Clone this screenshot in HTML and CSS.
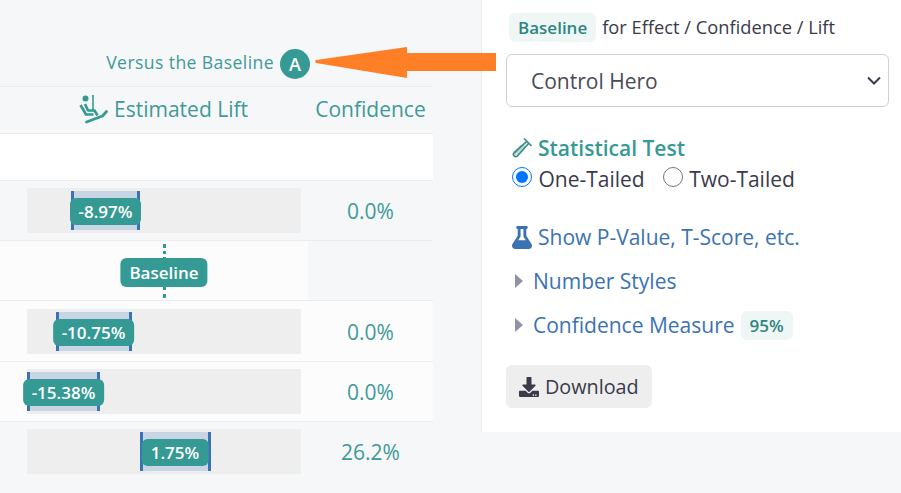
FILE: index.html
```html
<!DOCTYPE html>
<html lang="en">
	<head>
		<meta charset="UTF-8" />
		<title>Experiment Results</title>
		<link rel="stylesheet" href="styles.css">
	</head>
	<body>
		<div class="page">
			<div class="results">
				<div class="versus">
					<span class="versus-text">Versus the Baseline</span>
					<span class="letter">A</span>
				</div>
				<div class="row header">
					<div class="lift-head">
						<svg class="lift-icon" viewBox="0 0 30 30" width="30" height="30">
							<circle cx="6.500" cy="4.500" r="3" fill="currentColor"/>
							<path d="M14 1v15" stroke="currentColor" stroke-width="1.600" fill="none"/>
							<path d="M1.500 11l5.500 9.500h7.500" stroke="currentColor" stroke-width="2.600" fill="none" stroke-linejoin="round"/>
							<path d="M6 10l3 6.500h6.500l3 5" stroke="currentColor" stroke-width="2.600" fill="none" stroke-linejoin="round"/>
							<path d="M7.500 28l16-6 4-4.500" stroke="currentColor" stroke-width="2.800" fill="none" stroke-linecap="round" stroke-linejoin="round"/>
						</svg>
						<span>Estimated Lift</span>
					</div>
					<div class="conf">Confidence</div>
				</div>
				<div class="row empty"></div>
				<div class="row plain">
					<div class="lift">
						<div class="track">
							<div class="ci" style="left: 44px; width: 69px"></div>
							<div class="pill" style="left: 78.500px">-8.97%</div>
						</div>
					</div>
					<div class="conf">0.0%</div>
				</div>
				<div class="row light base">
					<div class="lift base-cell">
						<div class="dots"></div>
						<div class="pill base-pill">Baseline</div>
					</div>
				</div>
				<div class="row light tall">
					<div class="lift">
						<div class="track">
							<div class="ci" style="left: 29px; width: 76px"></div>
							<div class="pill" style="left: 66.500px">-10.75%</div>
						</div>
					</div>
					<div class="conf">0.0%</div>
				</div>
				<div class="row light">
					<div class="lift">
						<div class="track">
							<div class="ci" style="left: 0; width: 73px"></div>
							<div class="pill" style="left: 36.500px">-15.38%</div>
						</div>
					</div>
					<div class="conf">0.0%</div>
				</div>
				<div class="row plain">
					<div class="lift">
						<div class="track">
							<div class="ci" style="left: 113px; width: 71px"></div>
							<div class="pill" style="left: 148px">1.75%</div>
						</div>
					</div>
					<div class="conf">26.2%</div>
				</div>
			</div>

			<div class="panel">
				<div class="panel-title">
					<span class="tag">Baseline</span>
					<span class="panel-text">for Effect / Confidence / Lift</span>
				</div>
				<select class="picker">
					<option>Control Hero</option>
				</select>

				<div class="test-title">
					<svg viewBox="0 0 20 20" width="20" height="20">
						<path d="M1.800 13.500L9 6.500l4.500 1-7 7.500c-1.200 1.300-2.800 2.800-4 1.500s-1.500-2-.7-3z" fill="#b5d9d6"/>
						<path d="M12.500 1l6.500 6.500M14.800 3.300L2.300 14.500c-1.300 1.300-1.100 2.500-.2 3.400s2.200 1 3.400-.1L16.700 5.200" stroke="#3c8b88" stroke-width="1.700" fill="none" stroke-linecap="round"/>
					</svg>
					<span>Statistical Test</span>
				</div>
				<div class="radios">
					<label><input type="radio" name="tail" checked /> One-Tailed</label>
					<label><input type="radio" name="tail" /> Two-Tailed</label>
				</div>

				<div class="link show">
					<svg viewBox="0 0 448 512" width="20" height="23">
						<path d="M437.200 403.500L320 215V64h8c13.300 0 24-10.700 24-24V24c0-13.300-10.700-24-24-24H120c-13.300 0-24 10.700-24 24v16c0 13.300 10.700 24 24 24h8v151L10.800 403.500C-18.500 450.600 15.300 512 70.900 512h306.200c55.700 0 89.400-61.500 60.100-108.500zM137.900 320l48.200-77.600c3.700-5.200 5.800-11.600 5.800-18.400V64h64v160c0 6.900 2.200 13.200 5.800 18.400l48.200 77.600h-172z" fill="#3b72b3"/>
					</svg>
					<span>Show P-Value, T-Score, etc.</span>
				</div>
				<div class="link fold"><span class="caret"></span><span>Number Styles</span></div>
				<div class="link fold">
					<span class="caret"></span><span>Confidence Measure</span>
					<span class="tag small">95%</span>
				</div>

				<button class="download">
					<svg viewBox="0 0 512 512" width="20" height="20">
						<path d="M216 0h80c13.300 0 24 10.700 24 24v168h87.700c17.800 0 26.700 21.500 14.100 34.100L269.700 378.300c-7.500 7.500-19.800 7.500-27.300 0L90.100 226.100c-12.600-12.600-3.700-34.100 14.100-34.100H192V24c0-13.300 10.700-24 24-24zm296 376v112c0 13.300-10.700 24-24 24H24c-13.300 0-24-10.700-24-24V376c0-13.300 10.700-24 24-24h146.700l49 49c20.100 20.100 52.500 20.100 72.600 0l49-49H488c13.300 0 24 10.700 24 24zm-124 88c0-11-9-20-20-20s-20 9-20 20 9 20 20 20 20-9 20-20zm64 0c0-11-9-20-20-20s-20 9-20 20 9 20 20 20 20-9 20-20z" fill="#3a3a4a"/>
					</svg>
					<span>Download</span>
				</button>
			</div>

			<svg class="arrow" viewBox="0 0 182 33" width="182" height="33">
				<polygon points="0,15 1,17 92,32 92,25 181,25 181,7 92,7 92,1 1,14" fill="#ff7f27"/>
			</svg>
		</div>
	</body>
</html>
```

FILE: styles.css
```css
:root {
	--teal: #359a93;
	--teal-text: #3f9a98;
	--blue: #3b72b3;
	--line: #ebecf0;
	--background: #f6f7f9;
}

* {
	box-sizing: border-box;
}

body {
	margin: 0;
	font-family: 'Open Sans', sans-serif;
	background: var(--background);
	overflow: hidden;
}

.page {
	position: relative;
	display: flex;
	height: 493px;
}

.results {
	width: 433px;
	flex-shrink: 0;
}

.versus {
	display: flex;
	justify-content: flex-end;
	align-items: center;
	gap: 6px;
	height: 86px;
	padding: 42px 123px 0 0;
	font-size: 17.600px;
	letter-spacing: 0.4px;
	color: var(--teal-text);
}

.versus-text {
	margin-top: -4px;
}

.letter {
	display: flex;
	align-items: center;
	justify-content: center;
	width: 30px;
	height: 30px;
	border-radius: 50%;
	background: var(--teal);
	color: white;
	font-size: 18px;
	font-weight: 600;
	letter-spacing: 0;
}

.row {
	display: grid;
	grid-template-columns: 308px 125px;
	border-top: 1px solid var(--line);
	height: 60px;
	align-items: center;
}

.tall {
	height: 61px;
	padding-top: 1px;
}

.header {
	height: 47px;
	padding-bottom: 2px;
	font-size: 21px;
	color: var(--teal-text);
}

.empty {
	height: 47px;
	background: white;
}

.light {
	background: #fcfcfd;
}

.base {
	background: linear-gradient(to right, #fcfcfd 308px, var(--background) 308px);
}

.lift-head {
	display: flex;
	align-items: center;
	justify-content: flex-end;
	gap: 5px;
	padding-right: 60px;
}

.lift-icon {
	color: var(--teal);
}

.conf {
	text-align: center;
	font-size: 21px;
	color: var(--teal-text);
}

.lift {
	padding-left: 27px;
	padding-right: 7px;
}

.track {
	position: relative;
	height: 45px;
	background: #eeeeee;
}

.ci {
	position: absolute;
	top: 3px;
	bottom: 3px;
	background: #c8d5e4;
	border-left: 3px solid var(--blue);
	border-right: 3px solid var(--blue);
}

.pill {
	position: absolute;
	top: 10px;
	transform: translateX(-50%);
	padding: 2px 9px;
	border-radius: 6px;
	background: var(--teal);
	color: white;
	font-size: 17px;
	line-height: 23px;
	font-weight: 600;
	white-space: nowrap;
}

.base-cell {
	position: relative;
	height: 59px;
	padding: 0;
}

.dots {
	position: absolute;
	left: 163px;
	top: 3px;
	bottom: 2px;
	border-left: 3px dotted var(--teal);
}

.base-pill {
	left: 164px;
	top: 17px;
	padding: 3px 9px;
}

.panel {
	width: 420px;
	height: 432px;
	margin-left: 48px;
	padding: 13px 12px 0 24px;
	background: white;
	border-left: 1px solid var(--line);
	color: #3a3a4a;
}

.panel-title {
	display: flex;
	align-items: center;
	gap: 6px;
	padding-left: 3px;
	font-size: 18.300px;
}

.panel-text {
	margin-top: -3px;
}

.tag {
	padding: 3px 9px;
	border-radius: 6px;
	background: #eef7f5;
	color: #2f857f;
	font-size: 17px;
	line-height: 23px;
	font-weight: 600;
}

.picker {
	display: block;
	appearance: none;
	width: 383px;
	height: 53px;
	margin-top: 12px;
	padding-left: 24px;
	border: 1px solid #cfcfdc;
	border-radius: 6px;
	background: white url("data:image/svg+xml,%3Csvg xmlns='http://www.w3.org/2000/svg' width='14' height='9'%3E%3Cpath d='M1 1.500l6 6 6-6' stroke='%233a3a4a' stroke-width='2' fill='none'/%3E%3C/svg%3E") no-repeat right 7px center;
	color: #4a4a55;
	font-family: inherit;
	font-size: 21px;
}

.test-title {
	display: flex;
	align-items: center;
	gap: 6px;
	margin-top: 27px;
	padding-left: 6px;
	color: var(--teal);
	font-size: 21px;
	font-weight: 600;
	line-height: 28px;
}

.radios {
	display: flex;
	gap: 18px;
	margin-top: 4px;
	padding-left: 6px;
	font-size: 21px;
	line-height: 27px;
}

.radios input {
	width: 20px;
	height: 20px;
	margin: 0 1px 0 0;
}

.link {
	display: flex;
	align-items: center;
	height: 28px;
	padding-left: 6px;
	color: var(--blue);
	font-size: 21px;
}

.show {
	gap: 6px;
	margin-top: 30px;
}

.fold {
	margin-top: 16px;
}

.caret {
	width: 0;
	height: 0;
	margin-right: 10px;
	margin-left: 3px;
	border-left: 8px solid #8f93a8;
	border-top: 7px solid transparent;
	border-bottom: 7px solid transparent;
}

.small {
	margin-left: 6px;
}

.download {
	display: flex;
	align-items: center;
	gap: 6px;
	height: 43px;
	margin-top: 26px;
	padding: 0 13px;
	border: none;
	border-radius: 6px;
	background: #eeeeee;
	color: #3a3a4a;
	font-family: inherit;
	font-size: 19.800px;
}

.arrow {
	position: absolute;
	left: 315px;
	top: 46px;
}
```
